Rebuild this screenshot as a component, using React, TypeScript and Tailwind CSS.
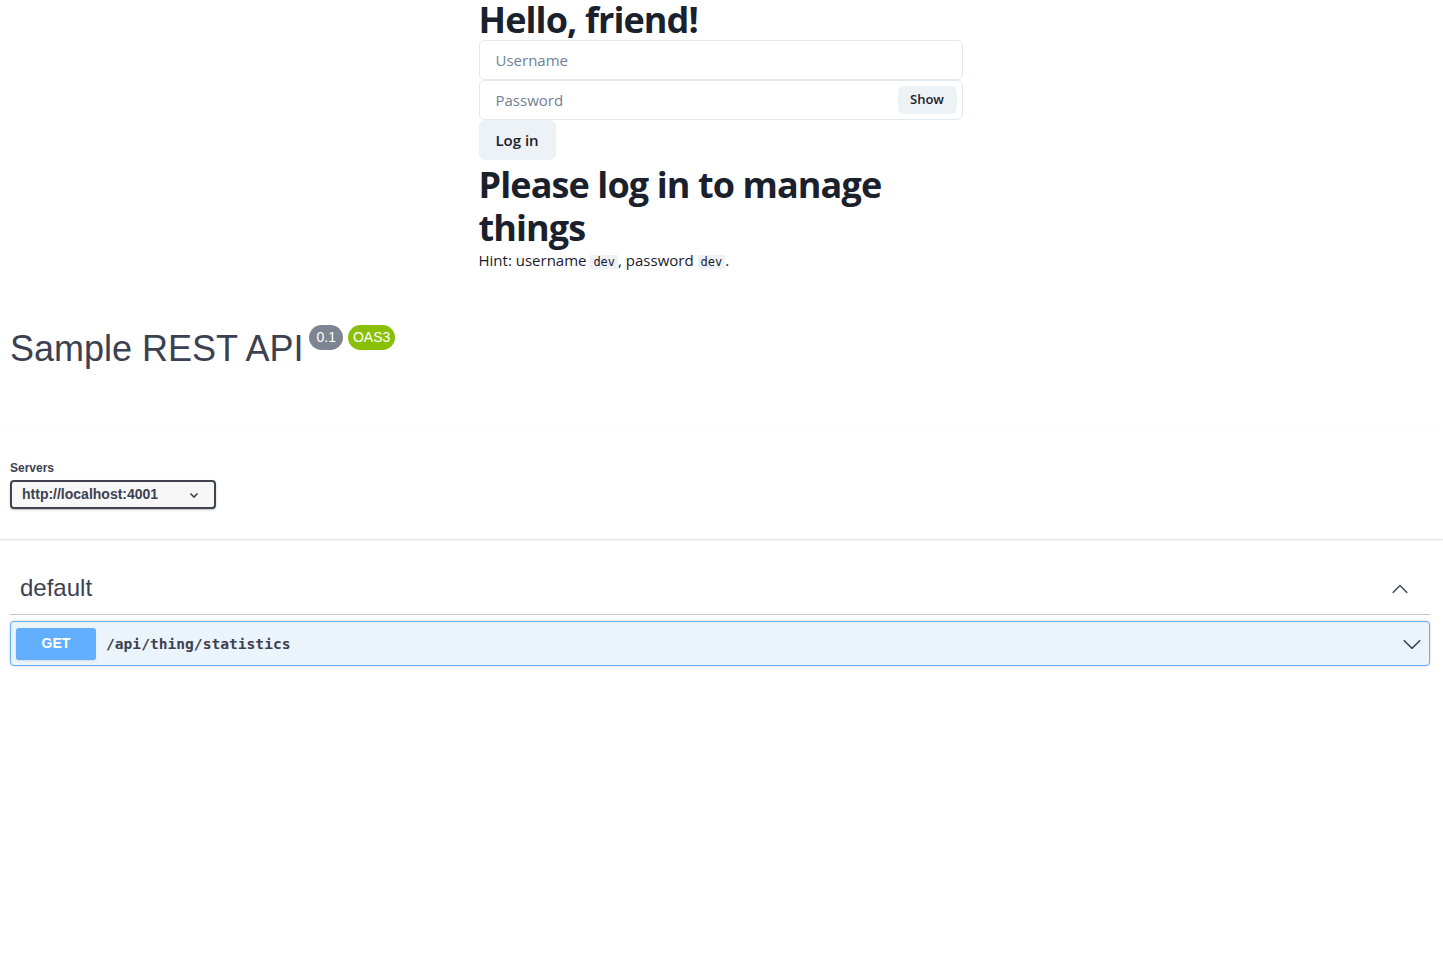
import React from 'react';

const ChevronUp = () => (
  <svg width="20" height="20" viewBox="0 0 20 20" className="fill-[#3b4151]">
    <path d="M17.418 14.908c-.271.271-.71.271-.979 0L10 8.469l-6.438 6.439c-.271.271-.71.271-.98 0-.27-.271-.27-.709 0-.979l6.928-6.928c.27-.271.709-.271.979 0l6.929 6.928c.271.27.271.708 0 .979z" />
  </svg>
);

const ChevronDown = () => (
  <svg width="20" height="20" viewBox="0 0 20 20" className="fill-[#3b4151]">
    <path d="M17.418 6.109c.272-.268.709-.268.979 0s.271.701 0 .969l-7.908 7.83c-.27.268-.707.268-.979 0l-7.908-7.83c-.27-.268-.27-.701 0-.969.271-.268.709-.268.979 0L10 13.25l7.418-7.141z" />
  </svg>
);

const LoginBox: React.FC = () => {
  const [show, setShow] = React.useState(false);
  return (
    <div className="w-[484px] ml-[calc(50%-243px)] text-[#1a202c] font-['Open_Sans',sans-serif]">
      <h1 className="text-[36px] leading-[40px] font-bold tracking-[-0.9px]">Hello, friend!</h1>
      <input
        placeholder="Username"
        className="block w-full h-10 px-4 border border-[#e2e8f0] rounded-md text-[15px] placeholder:text-[#718096] outline-none"
      />
      <div className="relative">
        <input
          type={show ? 'text' : 'password'}
          placeholder="Password"
          className="block w-full h-10 pl-4 pr-20 border border-[#e2e8f0] rounded-md text-[15px] placeholder:text-[#718096] outline-none"
        />
        <button
          onClick={() => setShow(!show)}
          className="absolute right-[6px] top-[6px] h-7 w-[59px] bg-[#edf2f7] rounded-md text-[13px] font-semibold"
        >
          {show ? 'Hide' : 'Show'}
        </button>
      </div>
      <button className="h-10 w-[77px] bg-[#edf2f7] rounded-md text-[15px] font-semibold">Log in</button>
      <h2 className="text-[36px] leading-[43px] font-bold tracking-[-0.9px] mt-[3px]">
        Please log in to manage
        <br />
        things
      </h2>
      <p className="text-[15px] leading-[22px]">
        Hint: username <code className="bg-[#edf2f7] px-[3px] text-[12px] font-['DejaVu_Sans_Mono',monospace]">dev</code>, password{' '}
        <code className="bg-[#edf2f7] px-[3px] text-[12px] font-['DejaVu_Sans_Mono',monospace]">dev</code>.
      </p>
    </div>
  );
};

const App: React.FC = () => {
  return (
    <div className="min-h-[974px] bg-white">
      <LoginBox />

      <div className="font-['Liberation_Sans',Arial,sans-serif] text-[#3b4151]">
        {/* info */}
        <div className="px-[10px] mt-[53px] mb-[60px]">
          <h2 className="text-[36px] leading-[45px] flex items-start">
            Sample REST API
            <span className="ml-[6px] mt-[-1px] flex gap-[5px]">
              <span className="bg-[#7d8492] text-white text-[14px] leading-[19px] px-[7px] py-[3px] rounded-full">0.1</span>
              <span className="bg-[#89bf04] text-white text-[14px] leading-[19px] px-[5px] py-[3px] rounded-full">OAS3</span>
            </span>
          </h2>
        </div>

        {/* servers */}
        <div className="py-[30px] px-[10px] bg-white shadow-[0_1px_2px_0_rgba(0,0,0,0.15)]">
          <span className="block text-[12px] font-bold leading-[14px] mb-[5px]">Servers</span>
          <div className="inline-flex items-center w-[206px] h-[29px] pl-[10px] pr-[14px] justify-between border-2 border-[#41444e] rounded bg-[#f7f7f7] shadow-[0_1px_2px_0_rgba(0,0,0,0.25)]">
            <span className="text-[14px] font-bold">http://localhost:4001</span>
            <svg width="12" height="12" viewBox="0 0 12 12" fill="none" stroke="#3b4151" strokeWidth="1.6">
              <path d="M2.5 4.5 6 8l3.5-3.5" />
            </svg>
          </div>
        </div>

        {/* tag */}
        <div className="pl-[10px] pr-[13px] mt-[20px]">
          <div className="flex items-center justify-between h-[56px] pt-[2px] pl-[10px] pr-[20px] border-b border-[rgba(59,65,81,0.3)]">
            <h3 className="text-[24px]">default</h3>
            <ChevronUp />
          </div>
          <div className="mt-[6px] flex items-center h-[45px] px-[5px] bg-[#ebf3fb] border border-[#61affe] rounded shadow-[0_0_3px_rgba(0,0,0,0.19)]">
            <span className="w-20 h-8 flex items-center justify-center bg-[#61affe] text-white text-[14px] font-bold rounded-[3px] shadow-[0_1px_2px_rgba(0,0,0,0.1)]">
              GET
            </span>
            <span className="ml-[10px] text-[14.6px] font-bold font-['DejaVu_Sans_Mono',monospace] flex-1">/api/thing/statistics</span>
            <span className="mr-[2px]"><ChevronDown /></span>
          </div>
        </div>
      </div>
    </div>
  );
};

export default App;
